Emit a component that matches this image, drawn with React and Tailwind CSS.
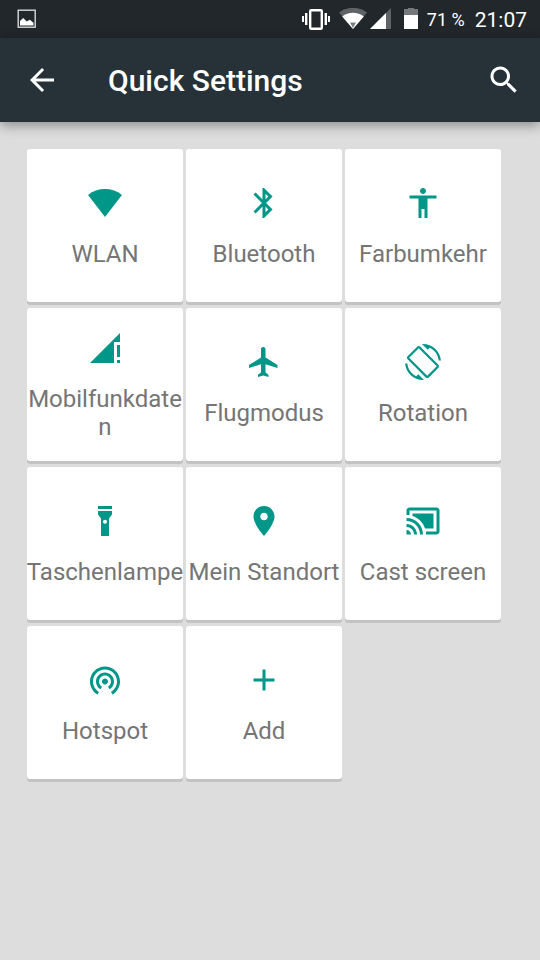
import React from 'react';

const tiles = [
  { id: 'wlan', label: 'WLAN', path: 'M.7 6.7A18 18 0 0 1 23.3 6.7L12 21.3z' },
  { id: 'bluetooth', label: 'Bluetooth', path: 'M17.71 7.71L12 2h-1v7.59L6.41 5 5 6.41 10.59 12 5 17.59 6.41 19 11 14.41V22h1l5.71-5.71-4.3-4.29 4.3-4.29zM13 5.83l1.88 1.88L13 9.59V5.83zm1.88 10.46L13 18.17v-3.76l1.88 1.88z' },
  { id: 'invert', label: 'Farbumkehr', path: 'M12 2c1.1 0 2 .9 2 2s-.9 2-2 2-2-.9-2-2 .9-2 2-2zm9 7h-6v13h-2v-6h-2v6H9V9H3V7h18v2z' },
  { id: 'mobile', label: 'Mobilfunkdaten', path: 'M20 18h2v-8h-2v8zm0 4h2v-2h-2v2zM2 22h16V8h4V2L2 22z' },
  { id: 'airplane', label: 'Flugmodus', path: 'M21 16v-2l-8-5V3.5c0-.83-.67-1.5-1.5-1.5S10 2.67 10 3.5V9l-8 5v2l8-2.5V19l-2 1.5V22l3.5-1 3.5 1v-1.5L13 19v-5.5l8 2.5z' },
  { id: 'rotation', label: 'Rotation', path: 'M16.48 2.52c3.27 1.55 5.61 4.72 5.97 8.48h1.5C23.44 4.84 18.29 0 12 0l-.66.03 3.81 3.81 1.33-1.32zm-6.25-.77c-.59-.59-1.54-.59-2.12 0L1.75 8.11c-.59.59-.59 1.54 0 2.12l12.02 12.02c.59.59 1.54.59 2.12 0l6.36-6.36c.59-.59.59-1.54 0-2.12L10.23 1.75zm4.6 19.44L2.81 9.17l6.36-6.36 12.02 12.02-6.36 6.36zm-7.31.29C4.25 19.94 1.91 16.76 1.55 13H.05C.56 19.16 5.71 24 12 24l.66-.03-3.81-3.81-1.33 1.32z' },
  { id: 'torch', label: 'Taschenlampe', path: 'M7.33 2h9.34v2H7.33zM7.33 5.4h9.34v2.2l-2 2.8V22H9.33V10.4l-2-2.8zM12 11.1a1.35 1.35 0 1 0 0 2.7 1.35 1.35 0 1 0 0-2.7z' },
  { id: 'location', label: 'Mein Standort', path: 'M12 2C8.13 2 5 5.13 5 9c0 5.25 7 13 7 13s7-7.75 7-13c0-3.87-3.13-7-7-7zm0 9.5c-1.38 0-2.5-1.12-2.5-2.5s1.12-2.5 2.5-2.5 2.5 1.12 2.5 2.5-1.12 2.5-2.5 2.5z' },
  { id: 'cast', label: 'Cast screen', path: 'M1 18v3h3c0-1.66-1.34-3-3-3zm0-4v2c2.76 0 5 2.24 5 5h2c0-3.87-3.13-7-7-7zm18-7H5v1.63c3.96 1.28 7.09 4.41 8.37 8.37H19V7zM1 10v2c4.97 0 9 4.03 9 9h2c0-6.08-4.93-11-11-11zm20-7H3c-1.1 0-2 .9-2 2v3h2V5h18v14h-7v2h7c1.1 0 2-.9 2-2V5c0-1.1-.9-2-2-2z' },
  { id: 'hotspot', label: 'Hotspot', path: 'M12 11c-1.1 0-2 .9-2 2s.9 2 2 2 2-.9 2-2-.9-2-2-2zm6 2c0-3.31-2.69-6-6-6s-6 2.69-6 6c0 2.22 1.21 4.15 3 5.19l1-1.74c-1.19-.7-2-1.97-2-3.45 0-2.21 1.79-4 4-4s4 1.79 4 4c0 1.48-.81 2.75-2 3.45l1 1.74c1.79-1.04 3-2.97 3-5.19zM12 3C6.48 3 2 7.48 2 13c0 3.7 2.01 6.92 4.99 8.65l1-1.73C5.61 18.53 4 15.96 4 13c0-4.42 3.58-8 8-8s8 3.58 8 8c0 2.96-1.61 5.53-4 6.92l1 1.73c2.99-1.73 5-4.95 5-8.65 0-5.52-4.48-10-10-10z' },
  { id: 'add', label: 'Add', path: 'M19 13h-6v6h-2v-6H5v-2h6V5h2v6h6v2z' },
];

const Icon = ({ path, className }) => (
  <svg className={`size-9 shrink-0 ${className}`} viewBox="0 0 24 24" fill="currentColor" fillRule="evenodd" aria-hidden="true">
    <path d={path} />
  </svg>
);

const StatusBar = () => (
  <div className="flex h-[38px] items-center justify-between bg-[#21272b] pl-[17px] pr-[13px] text-white">
    <svg className="size-5" viewBox="0 0 20 20" aria-hidden="true">
      <rect x="1.2" y="1.2" width="17" height="17" fill="none" stroke="#d8dadb" strokeWidth="1.4" />
      <path d="M3 16.5V12l3.2-3 3.6 3.4 3-1.6 3.7 3v2.7z" fill="currentColor" />
    </svg>

    <div className="flex items-center">
      {/* vibrate */}
      <svg className="mr-[9px] h-[22px] w-7" viewBox="0 0 28 22" fill="currentColor" aria-hidden="true">
        <path d="M0 8h2v6H0zM3 5h2.4v12H3zM22.6 5H25v12h-2.4zM26 8h2v6h-2z" />
        <rect x="8.2" y="2.2" width="11.6" height="18.6" rx="1" fill="none" stroke="currentColor" strokeWidth="2.4" />
      </svg>
      {/* wifi strength */}
      <svg className="mr-[3px] h-[22px] w-7" viewBox="0 0 28 22" aria-hidden="true">
        <path d="M0 4.5A23 23 0 0 1 28 4.5L14 21z" fill="#5f6365" />
        <path d="M3.2 8.4A18 18 0 0 1 24.8 8.4L14 21z" fill="#fff" />
        <path d="M11 14.6h6L14 20z" fill="#7c8082" />
      </svg>
      {/* cell signal */}
      <svg className="mr-[13px] h-[22px] w-[21px]" viewBox="0 0 21 22" aria-hidden="true">
        <path d="M21 0v21H0z" fill="#5f6365" />
        <path d="M16 5v16H0z" fill="#fff" />
      </svg>
      {/* battery */}
      <svg className="mr-[9px] h-[22px] w-3.5" viewBox="0 0 14 22" aria-hidden="true">
        <path d="M4 0h6v1h4v6H0V1h4z" fill="#75797b" />
        <path d="M0 7h14v14H0z" fill="#fff" />
      </svg>
      <span className="mr-[10px] mt-0.5 text-[18px] leading-5">71 %</span>
      <span className="mt-0.5 text-[21px] leading-6">21:07</span>
    </div>
  </div>
);

const Header = () => (
  <header className="flex h-[84px] items-center bg-[#263238] pl-6 pr-[18px] text-white shadow-[0_3px_12px_rgba(0,0,0,0.4)]">
    <button type="button" aria-label="Back">
      <Icon className="block" path="M20 11H7.83l5.59-5.59L12 4l-8 8 8 8 1.41-1.41L7.83 13H20v-2z" />
    </button>
    <h1 className="ml-12 flex-1 pt-0.5 text-[30px] font-medium leading-9">Quick Settings</h1>
    <button type="button" aria-label="Search">
      <Icon className="block" path="M15.5 14h-.79l-.28-.27C15.41 12.59 16 11.11 16 9.5 16 5.91 13.09 3 9.5 3S3 5.91 3 9.5 5.91 16 9.5 16c1.61 0 3.09-.59 4.23-1.57l.27.28v.79l5 4.99L20.49 19l-4.99-5zm-6 0C7.01 14 5 11.99 5 9.5S7.01 5 9.5 5 14 7.01 14 9.5 11.99 14 9.5 14z" />
    </button>
  </header>
);

const Tile = ({ label, path }) => (
  <button
    type="button"
    className="flex min-h-[153px] flex-col items-center justify-center rounded-[3px] bg-white pt-0.5 shadow-[0_3px_0_#c3c3c3]"
  >
    <Icon className="text-[#009688]" path={path} />
    {/* long labels may use the gutter on each side before they break */}
    <span className="-mx-px mt-[19px] self-stretch break-all text-center text-[24px] leading-7 text-[#757575]">{label}</span>
  </button>
);

export default function App() {
  return (
    <div className="min-h-screen bg-[#dddddd] font-[Roboto,sans-serif]">
      <StatusBar />
      <Header />
      <main className="grid grid-cols-3 gap-x-[3px] gap-y-1.5 pb-6 pl-[27px] pr-[39px] pt-[27px]">
        {tiles.map((tile) => (
          <Tile key={tile.id} label={tile.label} path={tile.path} />
        ))}
      </main>
    </div>
  );
}
